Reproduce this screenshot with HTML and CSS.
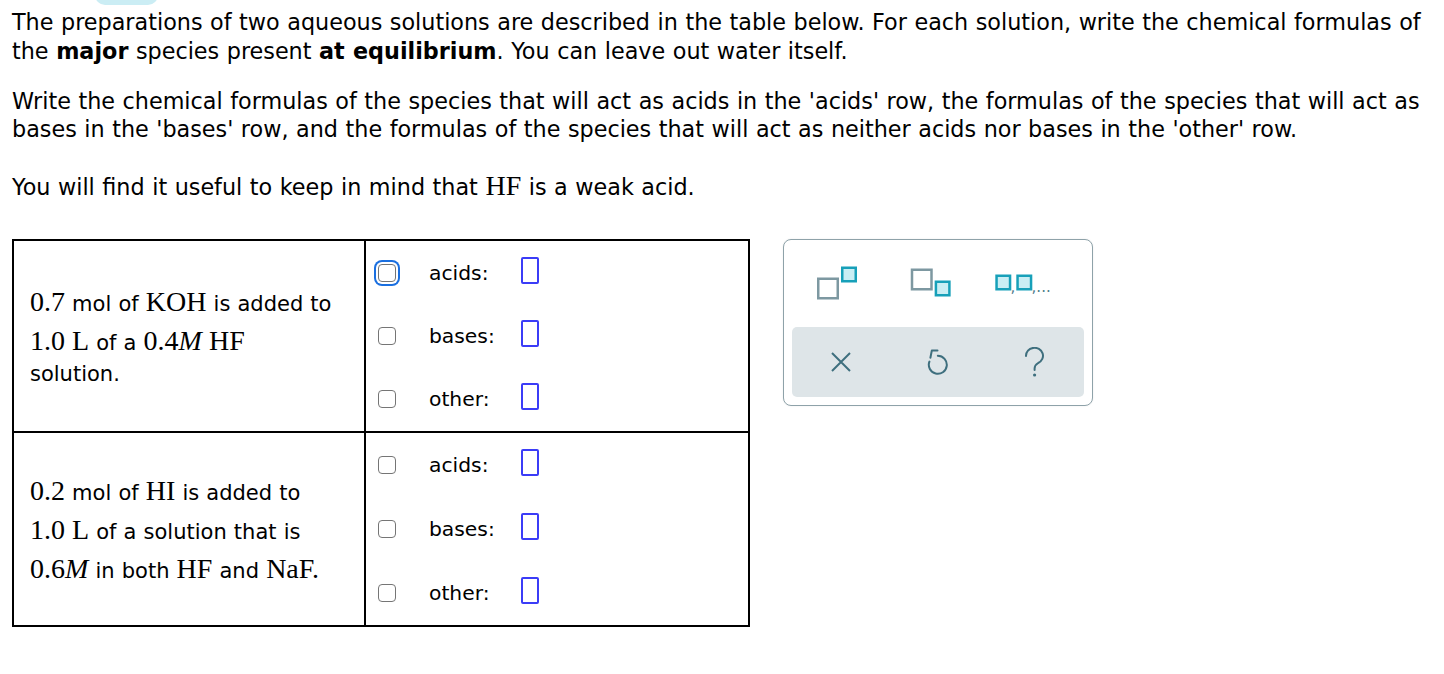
FILE: index.html
```html
<!DOCTYPE html>
<html>
<head>
<meta charset="utf-8">
<link rel="stylesheet" href="styles.css">
</head>
<body>
<div class="tab"></div>
<div class="content">
  <p class="para p1">The preparations of two aqueous solutions are described in the table below. For each solution, write the chemical formulas of the <b>major</b> species present <b>at equilibrium</b>. You can leave out water itself.</p>
  <p class="para p2">Write the chemical formulas of the species that will act as acids in the 'acids' row, the formulas of the species that will act as bases in the 'bases' row, and the formulas of the species that will act as neither acids nor bases in the 'other' row.</p>
  <p class="para p3">You will find it useful to keep in mind that <span class="mp">HF</span> is a weak acid.</p>

  <div class="work">
    <table class="sol">
      <tr>
        <td class="desc">
          <span class="m">0.7</span> mol of <span class="m">KOH</span> is added to<br>
          <span class="m">1.0 L</span> of a <span class="m">0.4<i>M</i> HF</span><br>
          solution.
        </td>
        <td class="answers">
          <div class="arow"><span class="cb focus"></span><span class="lbl">acids:</span><span class="slot"></span></div>
          <div class="arow"><span class="cb"></span><span class="lbl">bases:</span><span class="slot"></span></div>
          <div class="arow"><span class="cb"></span><span class="lbl">other:</span><span class="slot"></span></div>
        </td>
      </tr>
      <tr>
        <td class="desc">
          <span class="m">0.2</span> mol of <span class="m">HI</span> is added to<br>
          <span class="m">1.0 L</span> of a solution that is<br>
          <span class="m">0.6<i>M</i></span> in both <span class="m">HF</span> and <span class="m">NaF.</span>
        </td>
        <td class="answers second">
          <div class="arow"><span class="cb"></span><span class="lbl">acids:</span><span class="slot"></span></div>
          <div class="arow"><span class="cb"></span><span class="lbl">bases:</span><span class="slot"></span></div>
          <div class="arow"><span class="cb"></span><span class="lbl">other:</span><span class="slot"></span></div>
        </td>
      </tr>
    </table>

    <div class="toolbar">
      <div class="tools">
        <div class="tool">
          <svg width="97" height="40" viewBox="0 0 97 40">
            <rect x="26.25" y="14.75" width="19.5" height="19.5" fill="#fff" stroke="#7d98a1" stroke-width="2.5"/>
            <rect x="50.25" y="3.75" width="13.5" height="13.5" fill="#c9eef4" stroke="#17a0b9" stroke-width="2.5"/>
          </svg>
        </div>
        <div class="tool">
          <svg width="97" height="40" viewBox="0 0 97 40">
            <rect x="23" y="5.75" width="19.5" height="19.5" fill="#fff" stroke="#7d98a1" stroke-width="2.5"/>
            <rect x="46.9" y="17.75" width="13.5" height="13.5" fill="#c9eef4" stroke="#17a0b9" stroke-width="2.5"/>
          </svg>
        </div>
        <div class="tool">
          <svg width="97" height="40" viewBox="0 0 97 40">
            <rect x="9.55" y="11.75" width="13.5" height="13.5" fill="#c9eef4" stroke="#17a0b9" stroke-width="2.5"/>
            <rect x="30.55" y="11.75" width="13.5" height="13.5" fill="#c9eef4" stroke="#17a0b9" stroke-width="2.5"/>
            <text x="23.6" y="28" class="svgtxt">,</text>
            <text x="44.6" y="28" class="svgtxt">,...</text>
          </svg>
        </div>
      </div>
      <div class="actions">
        <div class="act">
          <svg width="22" height="22" viewBox="0 0 22 22">
            <path d="M2 2 L20 20 M20 2 L2 20" stroke="#3e6f7e" stroke-width="2" fill="none"/>
          </svg>
        </div>
        <div class="act">
          <svg width="22" height="29" viewBox="0 0 22 29">
            <path d="M10.8 7.8 A9 9 0 1 1 2.4 13.6" stroke="#3e6f7e" stroke-width="2" fill="none" stroke-linecap="round"/>
            <path d="M10.5 2.6 L4.8 2.6 L3.4 9.8" stroke="#3e6f7e" stroke-width="2" fill="none" stroke-linecap="round" stroke-linejoin="round"/>
          </svg>
        </div>
        <div class="act">
          <svg width="22" height="30" viewBox="0 0 22 30">
            <path d="M2 9 A8.5 8 0 1 1 14.2 16 C11.8 17.4 10.6 19 10.6 21.5 V23" stroke="#3e6f7e" stroke-width="2" fill="none" stroke-linecap="round"/>
            <circle cx="10.6" cy="28" r="1.6" fill="#3e6f7e"/>
          </svg>
        </div>
      </div>
    </div>
  </div>
</div>
</body>
</html>
```

FILE: styles.css
```css
html, body {
  margin: 0;
  padding: 0;
  background: #fff;
}
body {
  font-family: "DejaVu Sans", Verdana, sans-serif;
  font-size: 22.3px;
  word-spacing: 0.02em;
  color: #000;
  position: relative;
}
.tab {
  position: absolute;
  top: -16px;
  left: 95px;
  width: 63px;
  height: 21px;
  border-radius: 10px;
  background: #cbedf4;
}
.content {
  padding: 8px 6px 0 12px;
}
.para {
  margin: 0;
  line-height: 28.5px;
}
.p1 { margin-bottom: 21.5px; }
.p2 { margin-bottom: 28px; }
.mp {
  font-family: "Liberation Serif", "Times New Roman", serif;
  font-size: 28px;
  word-spacing: 0;
}
.work {
  display: flex;
  align-items: flex-start;
  margin-top: 38px;
}
.sol {
  border-collapse: collapse;
  width: 738px;
  table-layout: fixed;
}
.sol td {
  border: 2px solid #000;
  padding: 0;
  vertical-align: middle;
}
.desc {
  width: 334px;
  padding: 0 0 0 16px !important;
  font-size: 21px;
  line-height: 31px;
}
.m {
  display: inline-block;
  font-family: "Liberation Serif", "Times New Roman", serif;
  font-size: 28px;
  line-height: 28px;
  padding-top: 7px;
  word-spacing: 0;
}
.answers {
  padding: 0 0 0 12px !important;
}
.arow {
  display: flex;
  align-items: center;
  height: 63.3px;
}
.second .arow {
  height: 64px;
}
.cb {
  width: 18px;
  height: 18px;
  box-sizing: border-box;
  border: 1.5px solid #757575;
  border-radius: 4px;
  background: #fff;
  flex: none;
}
.cb.focus {
  box-shadow: 0 0 0 2px #fff, 0 0 0 4px #1a6fe0;
}
.lbl {
  margin-left: 33px;
  width: 92px;
  flex: none;
  font-size: 20.3px;
}
.slot {
  width: 18px;
  height: 27px;
  box-sizing: border-box;
  border: 2px solid #3b3cf7;
  border-radius: 2px;
  margin-top: -5px;
}
.toolbar {
  margin-left: 33px;
  margin-top: 0;
  width: 310px;
  height: 167px;
  box-sizing: border-box;
  border: 1px solid #8ea2a9;
  border-radius: 8px;
  padding: 0 8px 8px 8px;
  display: flex;
  flex-direction: column;
  background: #fff;
  box-shadow: 0 0 2px rgba(0,0,0,0.08);
}
.tools {
  display: grid;
  grid-template-columns: repeat(3, 1fr);
  height: 87px;
  align-items: center;
}
.tool svg { display: block; }
.svgtxt {
  font-family: "DejaVu Sans", sans-serif;
  font-size: 15px;
  fill: #4f7d8a;
}
.actions {
  flex: 1;
  background: #dee5e8;
  border-radius: 5px;
  display: grid;
  grid-template-columns: repeat(3, 1fr);
  align-items: center;
  justify-items: center;
}
.act svg { display: block; }
```
